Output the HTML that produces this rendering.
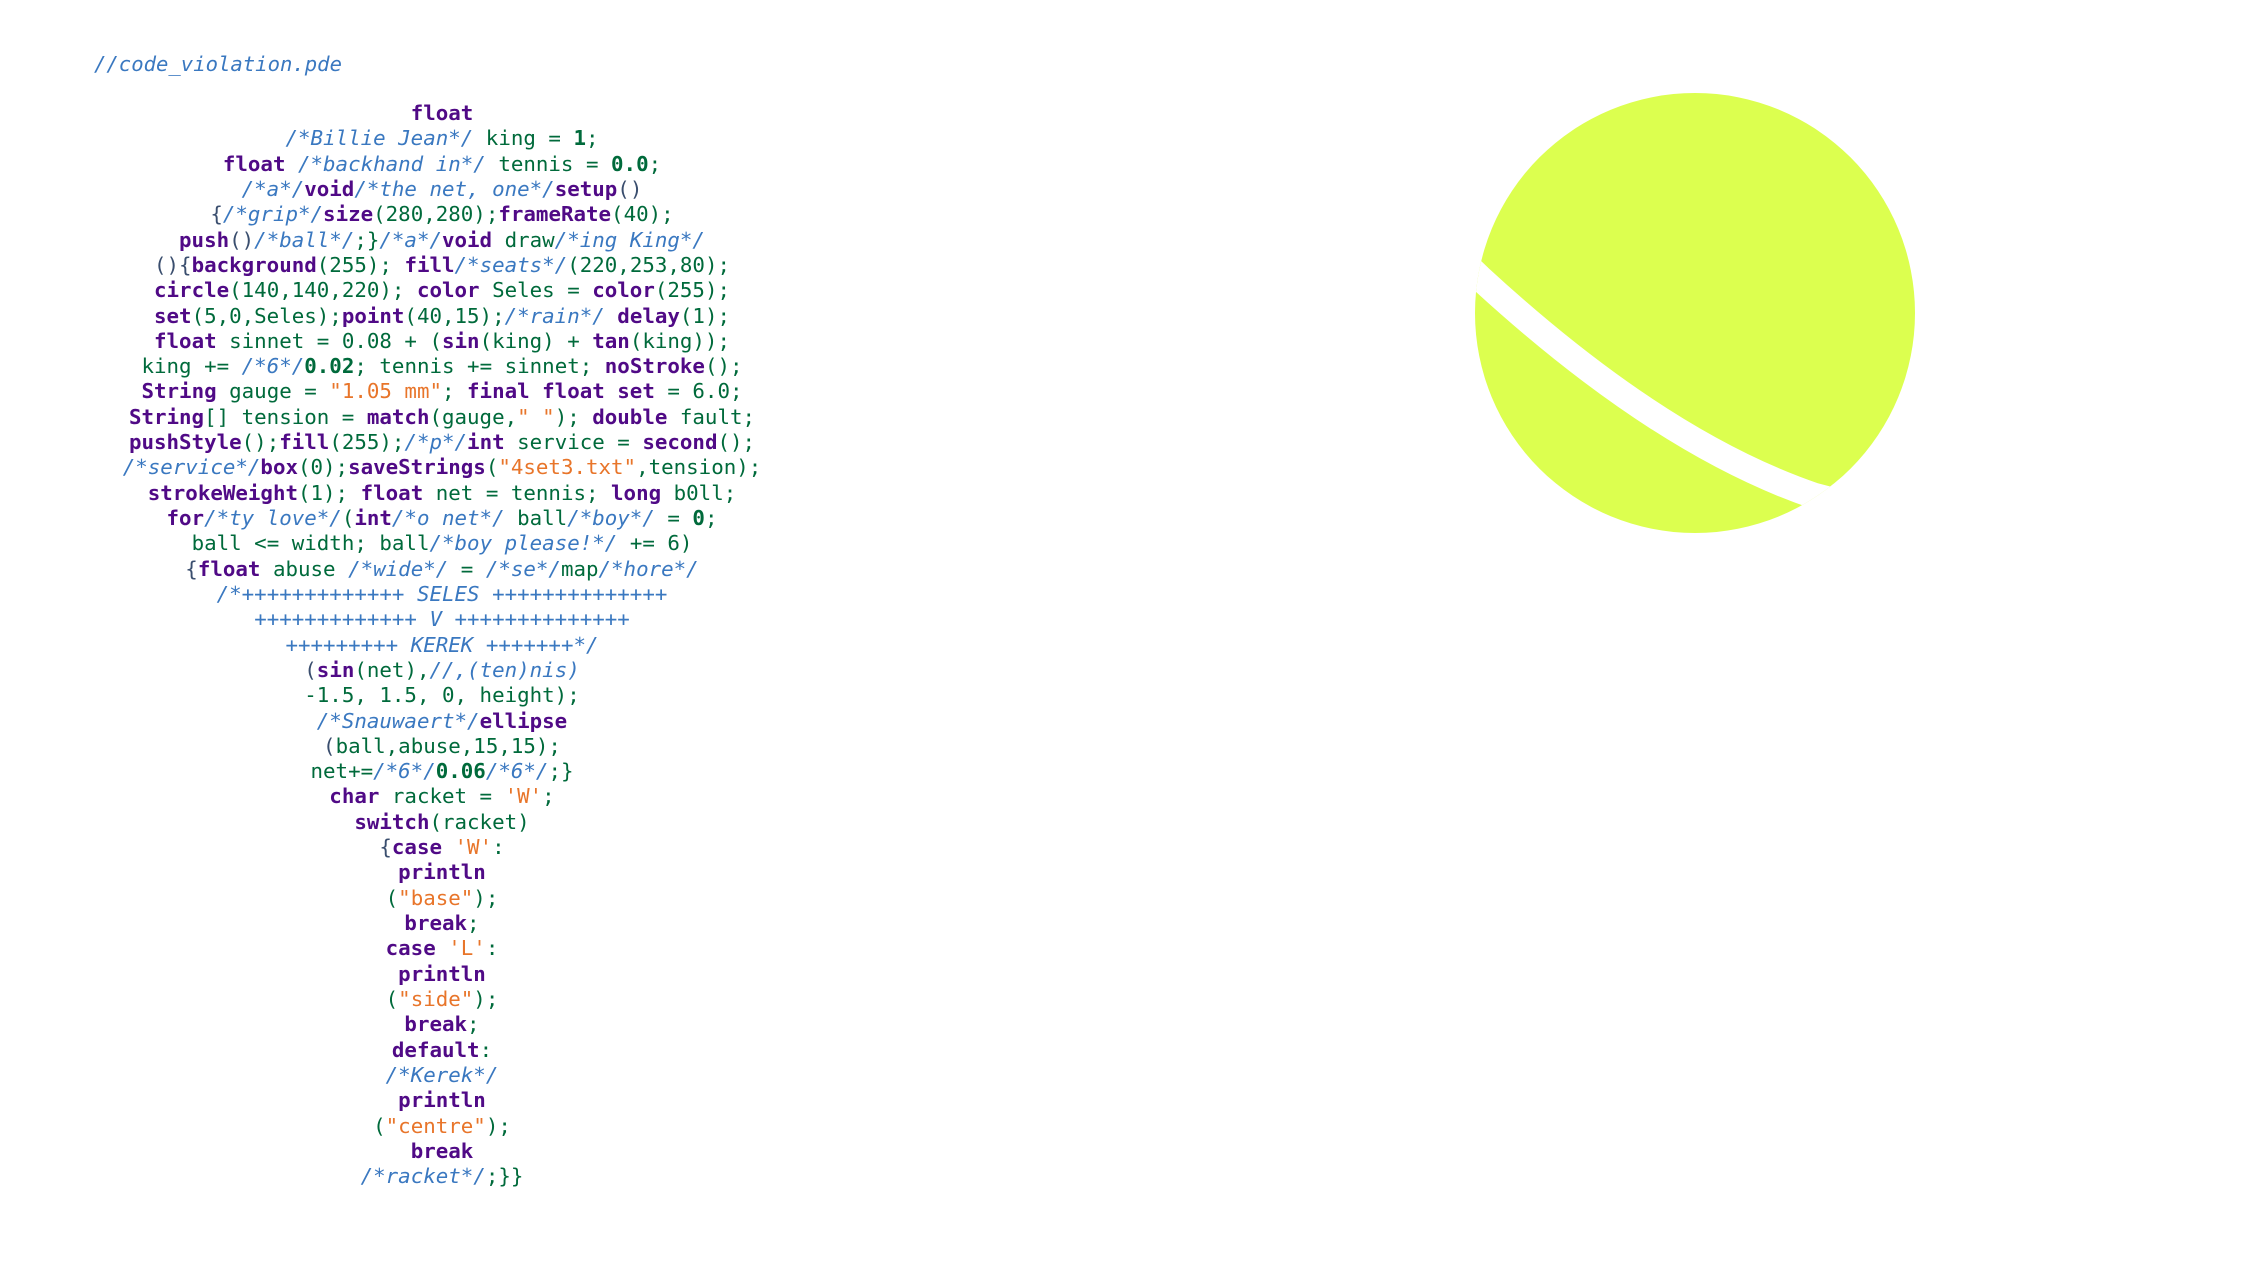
<!DOCTYPE html>
<html><head><meta charset="utf-8"><style>
html,body{margin:0;padding:0;background:#fff;width:2254px;height:1268px;overflow:hidden}
.hdr{position:absolute;left:94px;top:51px;font:italic 20.6px/26px "DejaVu Sans Mono","Liberation Mono",monospace;color:#3a78c0;white-space:pre}
.code{position:absolute;left:0;top:101px;width:884px;text-align:center;font:20.8px/25.32px "DejaVu Sans Mono","Liberation Mono",monospace;color:#006a3b;white-space:pre}
.k{font-weight:bold;color:#500a86}
.c{font-style:italic;color:#3a78c0}
.s{color:#e8752a}
.p{color:#3a4e6e}
svg{position:absolute;left:0;top:0}
</style></head><body>
<div class="hdr">//code_violation.pde</div>
<div class="code"><span class="k">float</span>
<span class="c">/*Billie Jean*/</span> king = <b>1</b>;
<span class="k">float</span> <span class="c">/*backhand in*/</span> tennis = <b>0.0</b>;
<span class="c">/*a*/</span><span class="k">void</span><span class="c">/*the net, one*/</span><span class="k">setup</span><span class="p">()</span>
<span class="p">{</span><span class="c">/*grip*/</span><span class="k">size</span>(280,280);<span class="k">frameRate</span>(40);
<span class="k">push</span><span class="p">()</span><span class="c">/*ball*/</span>;}<span class="c">/*a*/</span><span class="k">void</span> draw<span class="c">/*ing King*/</span>
<span class="p">(){</span><span class="k">background</span>(255); <span class="k">fill</span><span class="c">/*seats*/</span>(220,253,80);
<span class="k">circle</span>(140,140,220); <span class="k">color</span> Seles = <span class="k">color</span>(255);
<span class="k">set</span>(5,0,Seles);<span class="k">point</span>(40,15);<span class="c">/*rain*/</span> <span class="k">delay</span>(1);
<span class="k">float</span> sinnet = 0.08 + (<span class="k">sin</span>(king) + <span class="k">tan</span>(king));
king += <span class="c">/*6*/</span><b>0.02</b>; tennis += sinnet; <span class="k">noStroke</span>();
<span class="k">String</span> gauge = <span class="s">"1.05 mm"</span>; <span class="k">final float set</span> = 6.0;
<span class="k">String</span>[] tension = <span class="k">match</span>(gauge,<span class="s">" "</span>); <span class="k">double</span> fault;
<span class="k">pushStyle</span>();<span class="k">fill</span>(255);<span class="c">/*p*/</span><span class="k">int</span> service = <span class="k">second</span>();
<span class="c">/*service*/</span><span class="k">box</span>(0);<span class="k">saveStrings</span>(<span class="s">"4set3.txt"</span>,tension);
<span class="k">strokeWeight</span>(1); <span class="k">float</span> net = tennis; <span class="k">long</span> b0ll;
<span class="k">for</span><span class="c">/*ty love*/</span>(<span class="k">int</span><span class="c">/*o net*/</span> ball<span class="c">/*boy*/</span> = <b>0</b>;
ball &lt;= width; ball<span class="c">/*boy please!*/</span> += 6)
<span class="p">{</span><span class="k">float</span> abuse <span class="c">/*wide*/</span> = <span class="c">/*se*/</span>map<span class="c">/*hore*/</span>
<span class="c">/*+++++++++++++ SELES ++++++++++++++</span>
<span class="c">+++++++++++++ V ++++++++++++++</span>
<span class="c">+++++++++ KEREK +++++++*/</span>
<span class="p">(</span><span class="k">sin</span>(net),<span class="c">//,(ten)nis)</span>
-1.5, 1.5, 0, height);
<span class="c">/*Snauwaert*/</span><span class="k">ellipse</span>
<span class="p">(</span>ball,abuse,15,15);
net+=<span class="c">/*6*/</span><b>0.06</b><span class="c">/*6*/</span>;}
<span class="k">char</span> racket = <span class="s">'W'</span>;
<span class="k">switch</span>(racket)
<span class="p">{</span><span class="k">case</span> <span class="s">'W'</span>:
<span class="k">println</span>
(<span class="s">"base"</span>);
<span class="k">break</span>;
<span class="k">case</span> <span class="s">'L'</span>:
<span class="k">println</span>
(<span class="s">"side"</span>);
<span class="k">break</span>;
<span class="k">default</span>:
<span class="c">/*Kerek*/</span>
<span class="k">println</span>
(<span class="s">"centre"</span>);
<span class="k">break</span>
<span class="c">/*racket*/</span>;}}</div>
<svg width="2254" height="1268" viewBox="0 0 2254 1268">
<defs><clipPath id="cl"><circle cx="1695" cy="313" r="220"/></clipPath></defs>
<circle cx="1695" cy="313" r="220" fill="#dcff4f"/>
<g clip-path="url(#cl)">
<path d="M1451,250 L1479,277 Q1659,443 1815,496 L1861,508" stroke="#fff" stroke-width="26" fill="none"/>
<path d="M1833,484 L1931,484 L1931,600 L1781,600 Z" fill="#fff"/>
</g>
</svg>
</body></html>
